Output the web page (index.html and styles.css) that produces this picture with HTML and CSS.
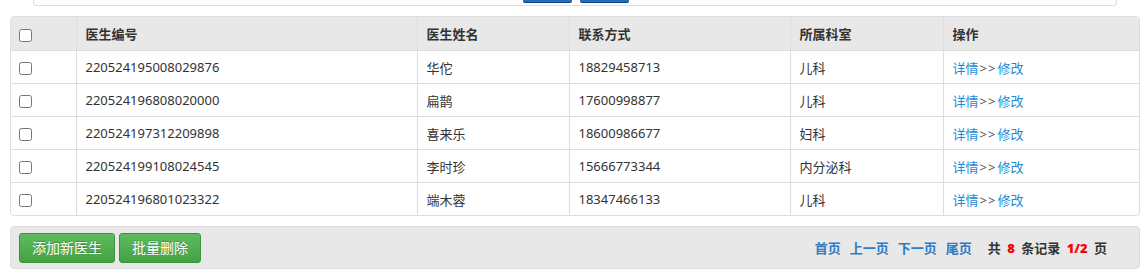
FILE: index.html
```html
<!DOCTYPE html>
<html>
<head>
    <meta charset="utf-8">
    <title>医生管理</title>
    <link rel="stylesheet" href="styles.css">
</head>
<body>
<div class="search_box">
    <span class="search_btn"></span>
    <span class="search_btn"></span>
</div>

<div class="table_box">
    <table class="doc_table">
        <thead>
        <tr>
            <th class="col_check"><input type="checkbox"></th>
            <th class="col_id">医生编号</th>
            <th class="col_name">医生姓名</th>
            <th class="col_tel">联系方式</th>
            <th class="col_dept">所属科室</th>
            <th class="col_op">操作</th>
        </tr>
        </thead>
        <tbody>
        <tr>
            <td class="col_check"><input type="checkbox"></td>
            <td>220524195008029876</td>
            <td>华佗</td>
            <td>18829458713</td>
            <td>儿科</td>
            <td><a href="#">详情</a><span class="sep">&gt;&gt;</span><a href="#">修改</a></td>
        </tr>
        <tr>
            <td class="col_check"><input type="checkbox"></td>
            <td>220524196808020000</td>
            <td>扁鹊</td>
            <td>17600998877</td>
            <td>儿科</td>
            <td><a href="#">详情</a><span class="sep">&gt;&gt;</span><a href="#">修改</a></td>
        </tr>
        <tr>
            <td class="col_check"><input type="checkbox"></td>
            <td>220524197312209898</td>
            <td>喜来乐</td>
            <td>18600986677</td>
            <td>妇科</td>
            <td><a href="#">详情</a><span class="sep">&gt;&gt;</span><a href="#">修改</a></td>
        </tr>
        <tr>
            <td class="col_check"><input type="checkbox"></td>
            <td>220524199108024545</td>
            <td>李时珍</td>
            <td>15666773344</td>
            <td>内分泌科</td>
            <td><a href="#">详情</a><span class="sep">&gt;&gt;</span><a href="#">修改</a></td>
        </tr>
        <tr>
            <td class="col_check"><input type="checkbox"></td>
            <td>220524196801023322</td>
            <td>端木蓉</td>
            <td>18347466133</td>
            <td>儿科</td>
            <td><a href="#">详情</a><span class="sep">&gt;&gt;</span><a href="#">修改</a></td>
        </tr>
        </tbody>
    </table>
</div>

<div class="bottom_bar">
    <div class="btns">
        <a class="btn_green" href="#">添加新医生</a>
        <a class="btn_green" href="#">批量删除</a>
    </div>
    <div class="pager">
        <a href="#">首页</a>
        <a href="#">上一页</a>
        <a href="#">下一页</a>
        <a href="#">尾页</a>
        <span class="total">共 <b>8</b> 条记录 <b>1/2</b> 页</span>
    </div>
</div>
</body>
</html>
```

FILE: styles.css
```css
body,div,span,table,th,td{margin:0;padding:0;}
a{text-decoration:none;}
*{box-sizing:border-box;}
body{
    font-family:"Noto Sans","Noto Sans CJK SC",sans-serif;
    font-size:13px;
    color:#333;
    padding:0 3px 0 10px;
    background:#fff;
}

/* 顶部搜索框，只露出底边 */
.search_box{
    height:6px; margin:0 23px;
    border:1px solid #ddd; border-top:none;
    border-radius:0 0 4px 4px;
    display:flex; justify-content:center; gap:8px;
    padding-left:1px;
}
.search_btn{
    width:49px; height:3px;
    background:#2b6cb0;
    border-bottom:1px solid #0d4a8c;
    border-radius:0 0 2px 2px;
}

/* 医生列表 */
.table_box{
    margin-top:10px;
    border:1px solid #ddd;
    border-radius:4px;
    overflow:hidden;
}
.doc_table{
    width:100%;
    border-collapse:collapse;
    table-layout:fixed;
}
.doc_table th,.doc_table td{
    text-align:left;
    padding:1px 9px 0;
    height:33px;
    border-left:1px solid #ddd;
    border-top:1px solid #ddd;
    font-weight:normal;
    white-space:nowrap;
}
.doc_table th{
    height:33px;
    background:#e8e8e8;
    font-weight:bold;
    border-top:none;
}
.doc_table .col_check{ border-left:none; padding-left:8px; width:65px;}
.doc_table .col_id{ width:341px;}
.doc_table .col_name{ width:152px;}
.doc_table .col_tel{ width:221px;}
.doc_table .col_dept{ width:153px;}
.doc_table input{ width:13px; height:13px; margin:0; vertical-align:middle;}
.doc_table td a{ color:#1d8ad6;}
.doc_table .sep{ color:#555; letter-spacing:1px; padding:0 1px;}

/* 底部按钮和分页 */
.bottom_bar{
    margin-top:10px;
    height:43px;
    background:#e8e8e8;
    border:1px solid #ddd;
    border-radius:4px;
    display:flex; align-items:center; justify-content:space-between;
    padding:0 32px 0 8px;
}
.btns{ display:flex; gap:4px;}
.btn_green{
    display:block;
    height:30px; line-height:28px;
    padding:0 12px;
    font-size:14px;
    color:#fff;
    background:linear-gradient(#5fbb5f,#43a043);
    border:1px solid #3d933d;
    border-radius:3px;
    text-shadow:0 -1px 0 rgba(0,0,0,0.2);
}
.pager{ font-weight:bold; display:flex; align-items:center; gap:9px;}
.pager a{ color:#2b7cc4;}
.pager .total{ margin-left:7px; color:#333; word-spacing:3px;}
.pager .total b{ color:#f00;}
```
